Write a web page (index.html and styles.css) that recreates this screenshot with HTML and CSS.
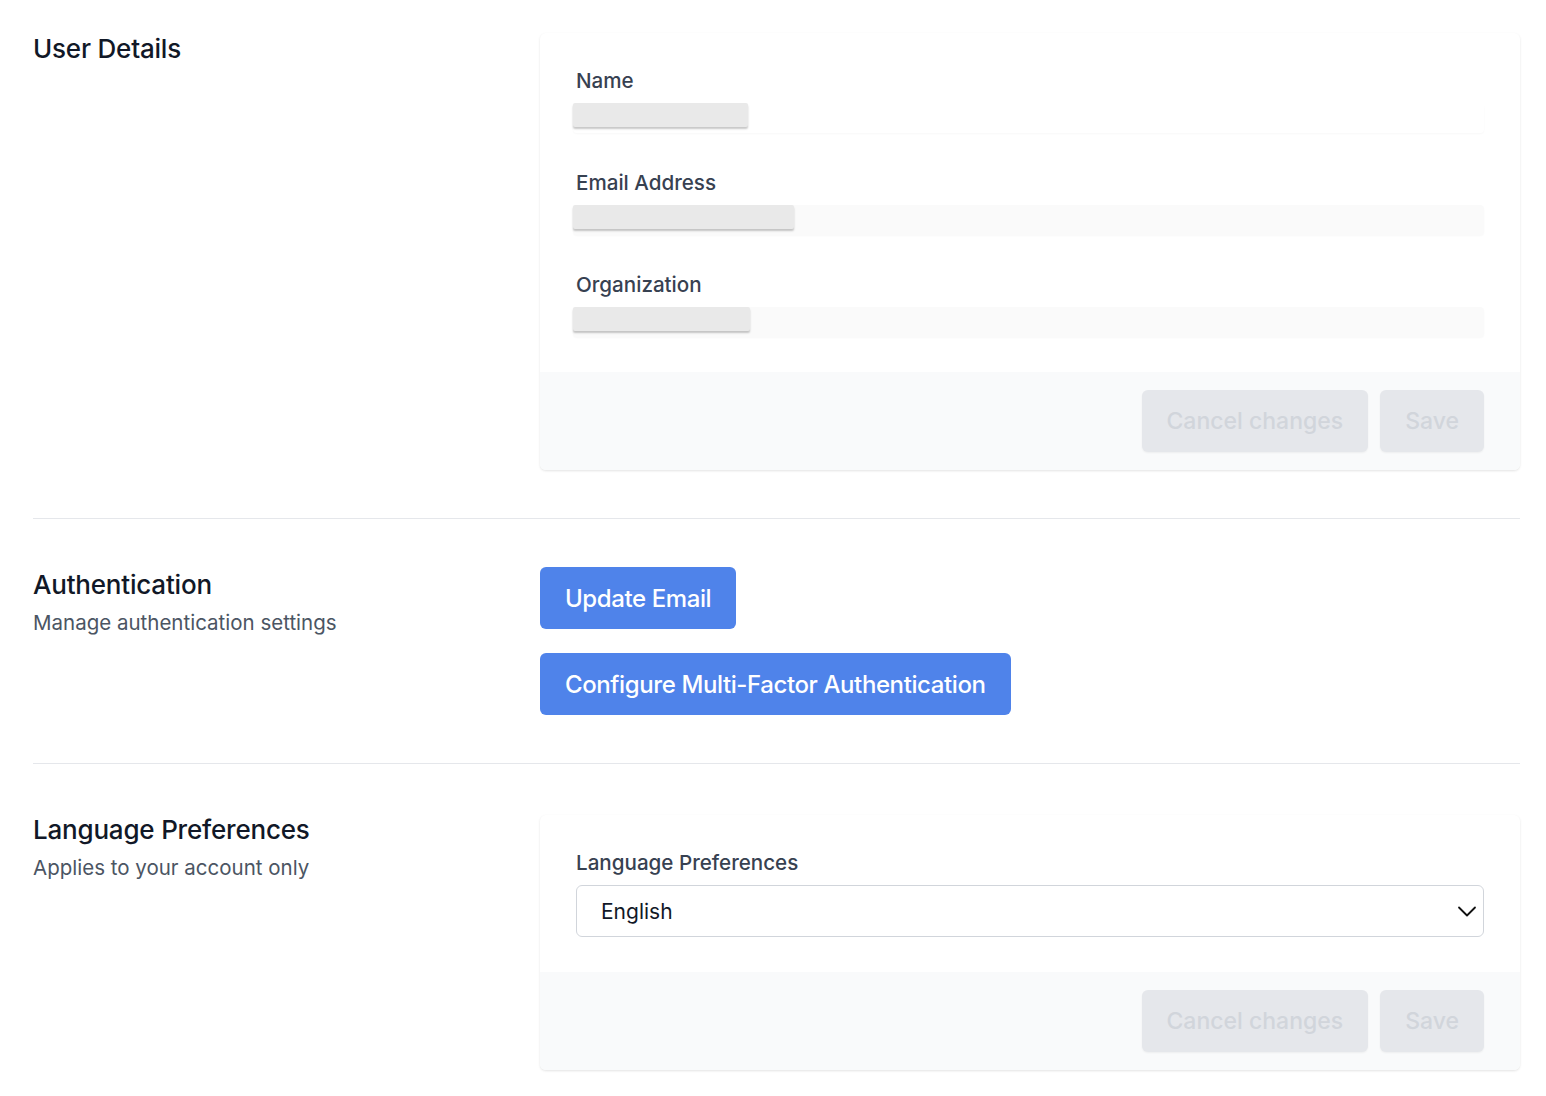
FILE: index.html
```html
<!DOCTYPE html>
<html lang="en">
<head>
    <meta charset="UTF-8">
    <title>Account Settings</title>
    <link rel="stylesheet" href="styles.css">
</head>
<body>
    <div class="page">
        <section class="section first">
            <div class="section-info">
                <h2>User Details</h2>
            </div>
            <div class="card">
                <div class="card-body">
                    <div class="field">
                        <label>Name</label>
                        <div class="input-static">
                            <span class="redacted" style="width: 175px"></span>
                        </div>
                    </div>
                    <div class="field">
                        <label>Email Address</label>
                        <div class="input-static filled">
                            <span class="redacted" style="width: 221px"></span>
                        </div>
                    </div>
                    <div class="field">
                        <label>Organization</label>
                        <div class="input-static filled">
                            <span class="redacted" style="width: 177px"></span>
                        </div>
                    </div>
                </div>
                <div class="card-footer">
                    <button class="btn-muted" disabled>Cancel changes</button>
                    <button class="btn-muted" disabled>Save</button>
                </div>
            </div>
        </section>

        <section class="section">
            <div class="section-info">
                <h2>Authentication</h2>
                <p>Manage authentication settings</p>
            </div>
            <div class="actions">
                <button class="btn-primary">Update Email</button>
                <button class="btn-primary">Configure Multi-Factor Authentication</button>
            </div>
        </section>

        <section class="section">
            <div class="section-info">
                <h2>Language Preferences</h2>
                <p>Applies to your account only</p>
            </div>
            <div class="card language-card">
                <div class="card-body">
                    <div class="field">
                        <label>Language Preferences</label>
                        <div class="select">
                            <span>English</span>
                            <svg width="20" height="20" viewBox="0 0 20 20" fill="none" stroke="#111" stroke-width="1.8" stroke-linecap="round" stroke-linejoin="round">
                                <path d="M2 6.5l8 8 8-8"/>
                            </svg>
                        </div>
                    </div>
                </div>
                <div class="card-footer">
                    <button class="btn-muted" disabled>Cancel changes</button>
                    <button class="btn-muted" disabled>Save</button>
                </div>
            </div>
        </section>
    </div>
</body>
</html>
```

FILE: styles.css
```css
body {
    margin: 0;
    background: #fff;
    font-family: Inter, "Noto Sans", "Liberation Sans", sans-serif;
    color: #111827;
}

.page {
    padding: 0 26px 0 33px;
}

.section {
    display: grid;
    grid-template-columns: 507px 1fr;
    padding: 48px 0;
    border-top: 1px solid #e5e7eb;
}

.section.first {
    border-top: none;
    padding-top: 33px;
}

.section-info h2 {
    margin: 0;
    font-size: 26px;
    font-weight: 500;
    line-height: 32px;
    letter-spacing: -0.2px;
    color: #111827;
    padding-top: 2px;
}

.section.first h2 {
    padding-top: 0;
}

.section-info p {
    margin: 8px 0 0;
    font-size: 20.5px;
    line-height: 28px;
    color: #4b5563;
}

.card {
    background: #fff;
    border-radius: 6px;
    box-shadow: 0 1px 3px rgba(0, 0, 0, 0.08), 0 1px 2px rgba(0, 0, 0, 0.04);
    overflow: hidden;
}

.language-card {
    margin-top: 3px;
}

.card-body {
    padding: 34px 36px 35px 36px;
    display: flex;
    flex-direction: column;
    gap: 36px;
}

.field label {
    display: block;
    font-size: 20.6px;
    font-weight: 500;
    line-height: 28px;
    color: #374151;
    margin-bottom: 8px;
}

.input-static {
    height: 30px;
    margin-left: -3px;
    border-radius: 4px;
    box-shadow: 0 1px 2px rgba(0, 0, 0, 0.03);
}

.input-static.filled {
    background: #fafafa;
}

.redacted {
    display: block;
    height: 24px;
    background: #e9e9e9;
    border-radius: 2px;
    box-shadow: 0 2px 2px rgba(0, 0, 0, 0.22);
}

.select {
    display: flex;
    align-items: center;
    justify-content: space-between;
    height: 50px;
    padding: 0 6px 0 24px;
    border: 1px solid #d1d5db;
    border-radius: 6px;
    font-size: 21px;
    color: #111827;
}

.card-footer {
    display: flex;
    justify-content: flex-end;
    gap: 12px;
    padding: 18px 36px;
    background: #f9fafb;
}

.btn-muted {
    height: 62px;
    padding: 0 25px;
    border: none;
    border-radius: 6px;
    background: #e5e7eb;
    color: #d1d5db;
    font-family: inherit;
    font-size: 23px;
    font-weight: 500;
    box-shadow: 0 1px 2px rgba(0, 0, 0, 0.05);
}

.actions {
    display: flex;
    flex-direction: column;
    align-items: flex-start;
    gap: 24px;
}

.btn-primary {
    height: 62px;
    padding: 0 25px;
    border: none;
    border-radius: 6px;
    background: #4f83ea;
    color: #fff;
    font-family: inherit;
    font-size: 24px;
    font-weight: 500;
    letter-spacing: -0.4px;
    cursor: pointer;
}
```
